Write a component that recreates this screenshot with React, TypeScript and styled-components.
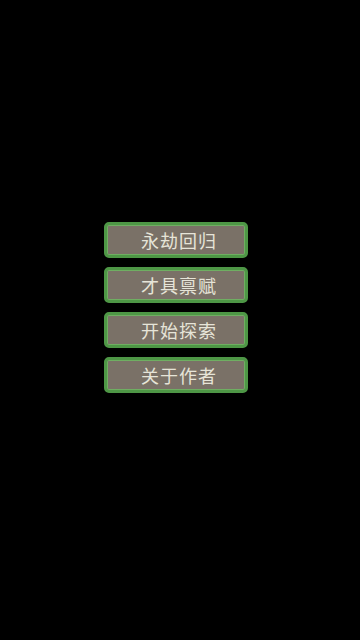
import styled, { createGlobalStyle } from "styled-components";

const GlobalStyle = createGlobalStyle`
  html, body {
    margin: 0;
    padding: 0;
    background: #000;
  }
`;

const Screen = styled.div`
  width: 360px;
  height: 640px;
  background: #000;
  display: flex;
  flex-direction: column;
  align-items: center;
  padding-top: 222px;
  box-sizing: border-box;
  padding-right: 8px;
`;

const Menu = styled.div`
  display: flex;
  flex-direction: column;
  gap: 9px;
`;

const MenuButton = styled.button`
  width: 144px;
  height: 36px;
  box-sizing: border-box;
  border: 3px solid #4e9746;
  border-radius: 5px;
  background: #7a7167;
  box-shadow: inset 0 0 0 1px #6fae62;
  color: #e6e4d8;
  font-family: "Noto Sans CJK SC", "Noto Sans", sans-serif;
  font-size: 18px;
  letter-spacing: 1px;
  padding: 0 0 0 6px;
  display: flex;
  align-items: center;
  justify-content: center;
  cursor: pointer;
`;

const items = ["永劫回归", "才具禀赋", "开始探索", "关于作者"];

export default function App() {
  return (
    <>
      <GlobalStyle />
      <Screen>
        <Menu>
          {items.map((label) => (
            <MenuButton key={label}>{label}</MenuButton>
          ))}
        </Menu>
      </Screen>
    </>
  );
}
